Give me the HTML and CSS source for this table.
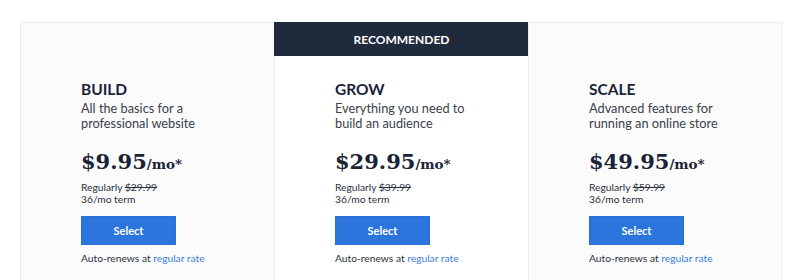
FILE: index.html
```html
<!DOCTYPE html>
<html lang="en">
<head>
<meta charset="utf-8">
<title>Plans</title>
<link rel="stylesheet" href="styles.css">
</head>
<body>
<div class="plans">
  <div class="plan">
    <div class="plan-body">
      <h2 class="plan-name">BUILD</h2>
      <p class="plan-desc">All the basics for a<br>professional website</p>
      <div class="price"><span class="amount">$9.95</span><span class="per">/mo*</span></div>
      <p class="regular">Regularly <s>$29.99</s><br>36/mo term</p>
      <button class="select">Select</button>
      <p class="renew">Auto-renews at <a href="#">regular rate</a></p>
    </div>
  </div>
  <div class="plan plan-featured">
    <div class="badge">RECOMMENDED</div>
    <div class="plan-body">
      <h2 class="plan-name">GROW</h2>
      <p class="plan-desc">Everything you need to<br>build an audience</p>
      <div class="price"><span class="amount">$29.95</span><span class="per">/mo*</span></div>
      <p class="regular">Regularly <s>$39.99</s><br>36/mo term</p>
      <button class="select">Select</button>
      <p class="renew">Auto-renews at <a href="#">regular rate</a></p>
    </div>
  </div>
  <div class="plan">
    <div class="plan-body">
      <h2 class="plan-name">SCALE</h2>
      <p class="plan-desc">Advanced features for<br>running an online store</p>
      <div class="price"><span class="amount">$49.95</span><span class="per">/mo*</span></div>
      <p class="regular">Regularly <s>$59.99</s><br>36/mo term</p>
      <button class="select">Select</button>
      <p class="renew">Auto-renews at <a href="#">regular rate</a></p>
    </div>
  </div>
</div>
</body>
</html>
```
FILE: styles.css
```css
html, body {
  margin: 0;
  background: #ffffff;
}
body {
  padding: 22px 0 0 20px;
  font-family: "Lato", "Liberation Sans", sans-serif;
  color: #2f3440;
  overflow: hidden;
}
.plans {
  display: grid;
  grid-template-columns: 254px 254px 254px;
  height: 258px;
}
.plan {
  background: #fbfbfc;
  border: 1px solid #ededee;
  border-right: none;
  border-bottom: none;
  display: flex;
  flex-direction: column;
}
.plan:last-child {
  border-right: 1px solid #ededee;
}
.plan-featured {
  background: #ffffff;
  border-top: none;
}
.badge {
  height: 34px;
  background: #1f2a3c;
  color: #ffffff;
  font-size: 12px;
  font-weight: 700;
  display: flex;
  align-items: center;
  justify-content: center;
  margin-left: -1px;
  margin-right: -1px;
}
.plan-body {
  padding: 56px 20px 0 60px;
}
.plan-featured .plan-body {
  padding-top: 23px;
}
.plan-name {
  margin: 0;
  font-size: 15.5px;
  line-height: 20px;
  font-weight: 700;
  color: #1b2336;
}
.plan-desc {
  margin: 2px 0 0;
  font-size: 12.75px;
  line-height: 15px;
  color: #3a3f4a;
}
.price {
  margin-top: 16px;
  font-family: "DejaVu Serif", "Liberation Serif", serif;
  font-weight: 700;
  color: #1b2336;
  line-height: 30px;
  white-space: nowrap;
}
.amount {
  font-size: 21px;
}
.per {
  font-size: 13.5px;
}
.regular {
  margin: 2px 0 0;
  font-size: 10.25px;
  line-height: 12px;
  color: #2a2f3a;
}
.regular s {
  text-decoration: line-through;
}
.select {
  display: block;
  margin-top: 11px;
  width: 95px;
  height: 29px;
  border: 1px solid #2a6fd1;
  background: #2c75dc;
  color: #ffffff;
  font-family: inherit;
  font-size: 11px;
  font-weight: 700;
  padding: 0;
}
.renew {
  margin: 6px 0 0;
  font-size: 10.25px;
  line-height: 14px;
  color: #2a2f3a;
}
.renew a {
  color: #3b7fd9;
  text-decoration: none;
}
```
